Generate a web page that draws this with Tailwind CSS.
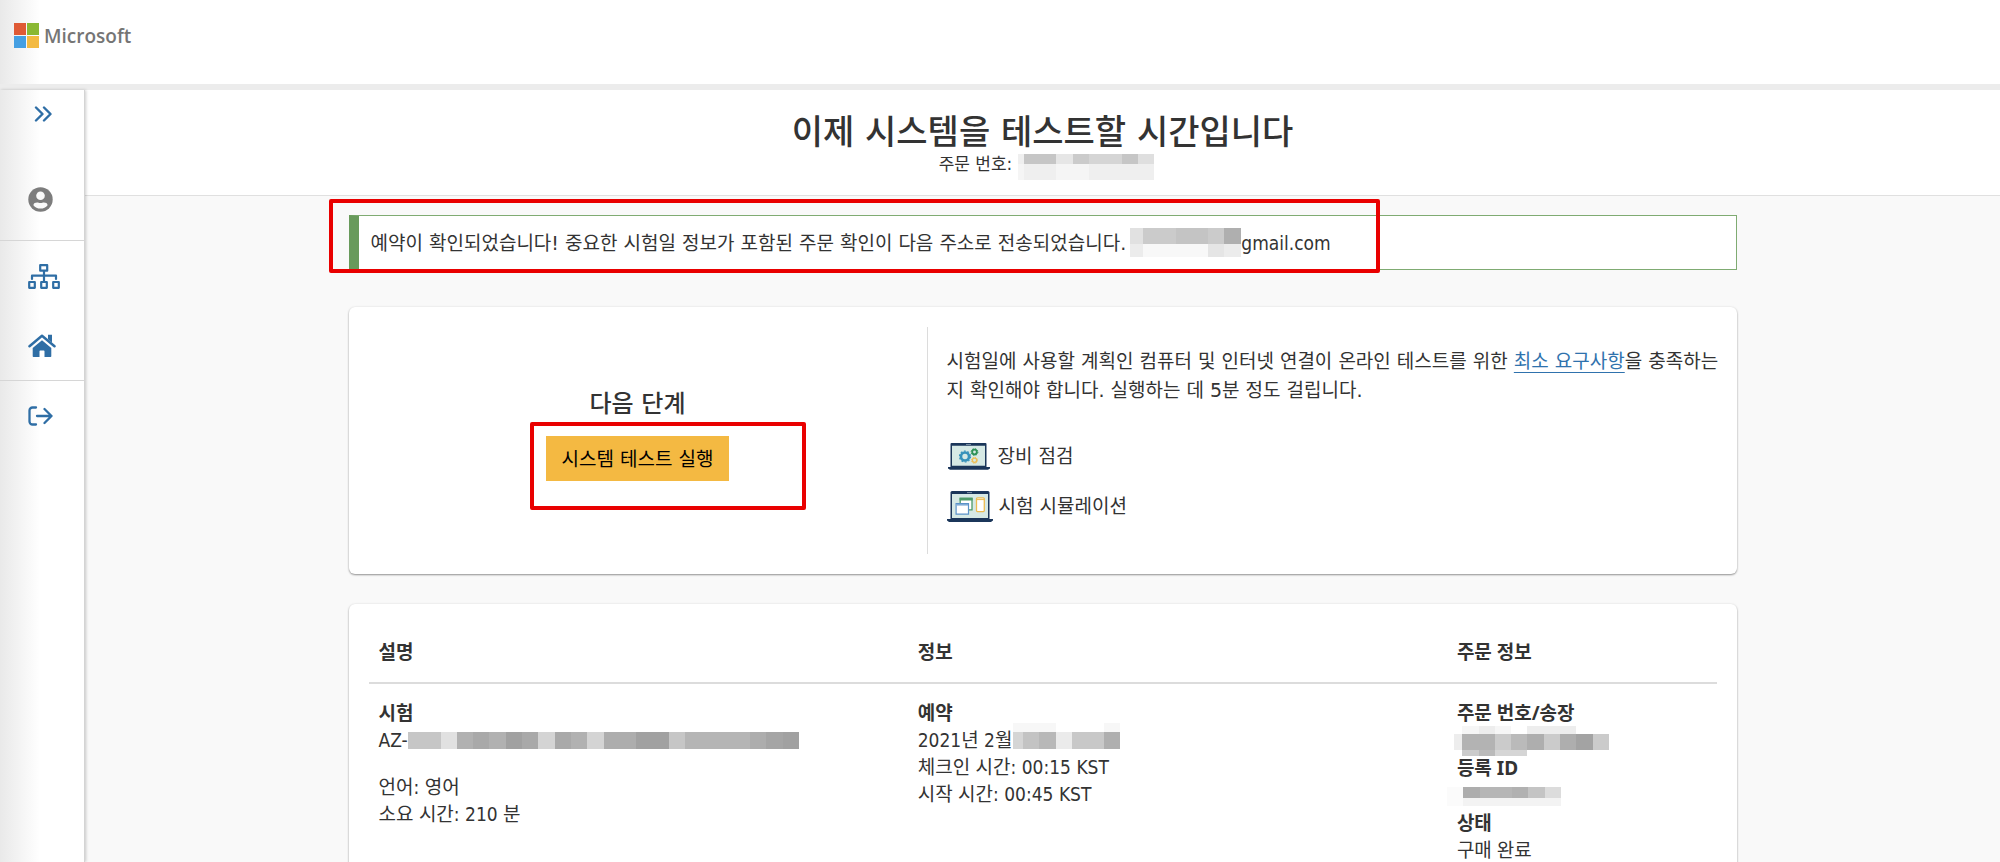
<!DOCTYPE html>
<html lang="ko">
<head>
<meta charset="utf-8">
<title>Microsoft</title>
<script src="https://cdn.jsdelivr.net/npm/@tailwindcss/browser@4"></script>
</head>
<body class="flex h-screen flex-col overflow-hidden bg-white font-['DejaVu_Sans','Noto_Sans_CJK_KR',sans-serif] text-[19px] leading-7 text-[#333333]">

<header class="flex h-[90px] shrink-0 items-start border-b-6 border-[#ececec] bg-linear-to-r from-[#e9e9e9] to-white to-[40px] pt-[23px] pl-[14px]">
  <a href="#" class="flex items-center gap-1">
    <svg class="size-[26px]" viewBox="0 0 26 26" aria-hidden="true">
      <path fill="#df5a35" d="M0 0h12v12H0z"/><path fill="#8ab833" d="M13 0h12v12H13z"/>
      <path fill="#459fe2" d="M0 13h12v12H0z"/><path fill="#f3ba42" d="M13 13h12v12H13z"/>
    </svg>
    <span class="font-['Open_Sans',sans-serif] text-[19px] leading-[26px] font-semibold text-[#757575]">Microsoft</span>
  </a>
</header>

<div class="flex min-h-0 flex-1">
  <nav class="z-10 w-[85px] shrink-0 border-r border-[#d4d4d4] bg-linear-to-r from-[#e9e9e9] to-white to-[40px] text-[#2f6ea5] shadow-[1px_0_3px_rgba(0,0,0,0.2)]">
    <div class="flex h-[151px] flex-col items-start border-b border-[#d6d6d6] pt-4 pl-7">
      <button type="button" class="ml-[6px] h-4">
        <svg class="h-4 w-[18px]" viewBox="0 0 18 16" fill="none" stroke="currentColor" stroke-width="2.4" stroke-linecap="round" stroke-linejoin="round" aria-hidden="true"><path d="M2 1.5 8.5 8 2 14.5M10 1.5 16.5 8 10 14.5"/></svg>
      </button>
      <button type="button" class="mt-[65px] h-[25px] text-[#7d7d7d]">
        <svg class="size-[25px]" viewBox="0 0 25 25" aria-hidden="true"><circle cx="12.5" cy="12.5" r="12.2" fill="currentColor"/><circle cx="12.5" cy="8.8" r="4.3" fill="#fafafa"/><path fill="#fafafa" d="M5.4 18.2c0-2.2 2-2.8 3.7-2.8 1 0 2 .5 3.4.5s2.400-.5 3.400-.5c1.700 0 3.700.6 3.700 2.800-1.700 2.200-4.200 3.400-7.100 3.400s-5.400-1.200-7.100-3.400z"/></svg>
      </button>
    </div>
    <div class="flex h-[140px] flex-col items-start border-b border-[#d6d6d6] pt-[23px] pl-7">
      <button type="button" class="h-[25px]">
        <svg class="h-[25px] w-8" viewBox="0 0 32 25" fill="none" stroke="currentColor" stroke-width="2.200" stroke-linejoin="round" aria-hidden="true"><path d="M12.200 1.200h7v5.500h-7zM1.200 18h5.600v5.800H1.200zM13.200 18h5.600v5.800h-5.600zM25.200 18h5.600v5.800h-5.600zM16 7v10.500M4 15v-3.300h24V15" stroke-linecap="round"/></svg>
      </button>
      <button type="button" class="mt-[45px] h-[23px]">
        <svg class="h-[23px] w-7" viewBox="0 0 28 23" fill="currentColor" aria-hidden="true"><path d="M14 6.300 4.700 14v8.200c0 .4.300.8.800.8h6v-5.800c0-.4.300-.7.700-.7h3.600c.4 0 .7.300.7.700V23h6c.5 0 .8-.4.800-.8V14z"/><path d="M1.500 12.300 14 1.800l12.500 10.500" fill="none" stroke="currentColor" stroke-width="2.500" stroke-linecap="round" stroke-linejoin="round"/><path d="M20 .8h4v7.800l-4-3.300z"/></svg>
      </button>
    </div>
    <div class="flex flex-col items-start pt-[25px] pl-7">
      <button type="button" class="h-5">
        <svg class="h-5 w-[25px]" viewBox="0 0 25 20" fill="none" stroke="currentColor" stroke-width="2.300" stroke-linecap="round" stroke-linejoin="round" aria-hidden="true"><path d="M8 1.500H4.500a3 3 0 0 0-3 3v11a3 3 0 0 0 3 3H8M9 10h14.500M16.500 3 23.500 10l-7 7"/></svg>
      </button>
    </div>
  </nav>

  <main class="min-w-0 flex-1 overflow-hidden bg-[#f9f9f9]">
    <section class="flex h-[106px] flex-col items-center border-b border-[#e0e0e0] bg-white pt-5">
      <h1 class="text-[34px] leading-[44px] font-medium">이제 시스템을 테스트할 시간입니다</h1>
      <div class="flex items-start gap-[6px] pl-2">
        <p class="text-[17px] leading-5">주문 번호:</p>
        <svg class="h-[26px] w-[136px]" viewBox="0 0 136 26" shape-rendering="crispEdges" aria-hidden="true">
          <path fill="#efefef" d="M0 0h6v10H0zM6 10h32v16H6zM71 10h65v16H71z"/><path fill="#f5f5f5" d="M0 10h6v16H0zM38 10h33v16H38z"/>
          <path fill="#c6c6c6" d="M6 0h32v10H6zM104 0h16v10h-16z"/><path fill="#e6e6e6" d="M38 0h17v10H38z"/>
          <path fill="#cbcbcb" d="M55 0h16v10H55z"/><path fill="#d5d5d5" d="M71 0h33v10H71z"/><path fill="#dfdfdf" d="M120 0h16v10h-16z"/>
        </svg>
      </div>
    </section>

    <div class="mx-auto w-full max-w-[1388px] pt-[19px]">
      <div class="relative">
        <div role="status" class="flex h-[55px] items-center border border-l-10 border-[#7fab72] border-l-[#689a5b] bg-white pl-3">
          <p>예약이 확인되었습니다! 중요한 시험일 정보가 포함된 주문 확인이 다음 주소로 전송되었습니다.</p>
          <svg class="ml-1 h-[29px] w-[111px]" viewBox="0 0 111 29" shape-rendering="crispEdges" aria-hidden="true">
            <path fill="#e1e1e1" d="M0 0h13v16H0z"/><path fill="#cbcbcb" d="M13 0h33v16H13zM78 0h16v16H78z"/><path fill="#c4c4c4" d="M46 0h32v16H46z"/><path fill="#afafaf" d="M94 0h17v16H94z"/>
            <path fill="#ececec" d="M0 16h13v13H0zM94 16h17v13H94z"/><path fill="#f8f8f8" d="M13 16h65v13H13z"/><path fill="#e5e5e5" d="M78 16h16v13H78z"/>
          </svg>
          <span class="font-['DejaVu_Sans_Condensed','Noto_Sans',sans-serif]">gmail.com</span>
        </div>
        <div class="pointer-events-none absolute -top-4 -left-5 h-[74px] w-[1051px] rounded-xs border-4 border-[#e90000]"></div>
      </div>

      <section class="mt-[37px] flex rounded-md bg-white py-5 shadow-[0_1px_2px_rgba(0,0,0,0.4),0_0_3px_rgba(0,0,0,0.06)]">
        <div class="flex min-h-[227px] w-[579px] shrink-0 flex-col items-center justify-center border-r border-[#dcdcdc] pb-3">
          <h2 class="text-2xl leading-8 font-medium">다음 단계</h2>
          <div class="relative mt-4">
            <button type="button" class="h-[45px] bg-[#f4b942] px-4 text-black">시스템 테스트 실행</button>
            <div class="pointer-events-none absolute -top-[14px] -left-4 h-[88px] w-[276px] rounded-xs border-4 border-[#e90000]"></div>
          </div>
        </div>
        <div class="flex-1 pt-5 pr-4 pl-[19px]">
          <p class="leading-[29px]">시험일에 사용할 계획인 컴퓨터 및 인터넷 연결이 온라인 테스트를 위한 <a href="#" class="text-[#2f72ad] underline underline-offset-4">최소 요구사항</a>을 충족하는지 확인해야 합니다. 실행하는 데 5분 정도 걸립니다.</p>
          <ul class="mt-[35px] flex flex-col gap-[18px]">
            <li class="flex h-8 items-center gap-[7px]">
              <svg class="h-[27px] w-11" viewBox="0 0 44 27" aria-hidden="true">
                <path fill="#1b365a" d="M4.500 0h34a1 1 0 0 1 1 1v23h-36V1a1 1 0 0 1 1-1z"/><path fill="#d6e9e5" d="M5 2.800h33v20H5z"/><path fill="#1b365a" d="M1 24h42v1.500l-2 1.200H3L1 25.500z"/><path fill="#8fa3b5" d="M19 1h5v.8h-5z"/>
                <circle cx="18" cy="13.500" r="4" fill="none" stroke="#3792bb" stroke-width="2.600"/><circle cx="18" cy="13.500" r="5.500" fill="none" stroke="#3792bb" stroke-width="1.200" stroke-dasharray="1.800 1.655"/>
                <circle cx="27.500" cy="9" r="2.300" fill="none" stroke="#2c9156" stroke-width="1.800"/><circle cx="27.500" cy="9" r="3.400" fill="none" stroke="#2c9156" stroke-width="1" stroke-dasharray="1.400 1.270"/>
                <circle cx="27.500" cy="17.300" r="2.100" fill="none" stroke="#efbe52" stroke-width="1.300"/><circle cx="27.500" cy="17.300" r="3" fill="none" stroke="#efbe52" stroke-width="1" stroke-dasharray="1.200 1.156"/>
              </svg>
              <span>장비 점검</span>
            </li>
            <li class="flex h-8 items-center gap-[6px]">
              <svg class="h-[31px] w-[46px]" viewBox="0 0 46 31" aria-hidden="true">
                <path fill="#1b365a" d="M5 0h36a1.500 1.500 0 0 1 1.500 1.500V28h-39V1.500A1.500 1.500 0 0 1 5 0z"/><path fill="#d6e9e5" d="M5 3h36v24H5z"/><path fill="#1b365a" d="M0 28h46v1.500L44 31H2l-2-1.500z"/><path fill="#8fa3b5" d="M20 1.200h5v.9h-5z"/>
                <path fill="#fff" stroke="#4c9a68" stroke-width="1.300" d="M13.200 7.300H25v11.500H13.200z"/><path fill="#4c9a68" d="M12.600 6.700h13v2.800h-13z"/>
                <path fill="#fff" stroke="#5a92c8" stroke-width="1.200" d="M9.100 12.600h12.400v10.500H9.100z"/><path fill="#7eabd6" d="M9.600 13h11.400v1.600H9.600z"/>
                <rect x="29.500" y="6.800" width="7.800" height="13.800" rx="1" fill="#fff" stroke="#edbb50" stroke-width="1.300"/><path stroke="#edbb50" stroke-width="1" d="M30 8.600h7"/>
              </svg>
              <span>시험 시뮬레이션</span>
            </li>
          </ul>
        </div>
      </section>

      <section class="mt-[30px] rounded-md bg-white px-5 pt-[35px] pb-10 shadow-[0_1px_2px_rgba(0,0,0,0.4),0_0_3px_rgba(0,0,0,0.06)]">
        <table class="w-full table-fixed border-collapse text-left align-top leading-[27px]">
          <colgroup><col class="w-2/5"><col class="w-2/5"><col class="w-1/5"></colgroup>
          <thead class="font-['Noto_Sans','Noto_Sans_CJK_KR',sans-serif]">
            <tr class="border-b-2 border-[#dcdcdc]">
              <th class="px-[10px] pb-4 font-bold">설명</th>
              <th class="px-[10px] pb-4 font-bold">정보</th>
              <th class="px-[10px] pb-4 font-bold">주문 정보</th>
            </tr>
          </thead>
          <tbody class="font-['DejaVu_Sans_Condensed','Noto_Sans_CJK_KR',sans-serif]">
            <tr class="align-top">
              <td class="px-[10px] pt-4">
                <p class="font-bold">시험</p>
                <div class="flex h-[27px] items-center">
                  <span>AZ-</span>
                  <svg class="h-[17px] w-[391px]" viewBox="0 0 24 17" preserveAspectRatio="none" shape-rendering="crispEdges" aria-hidden="true">
                    <path fill="#c6c6c6" d="M0 0h2v17H0zM16 0h1v17h-1z"/><path fill="#e1e1e1" d="M2 0h1v17H2z"/><path fill="#b1b1b1" d="M3 0h1v17H3zM5 0h1v17H5zM10 0h1v17h-1z"/>
                    <path fill="#a9a9a9" d="M4 0h1v17H4zM7 0h1v17H7zM9 0h1v17H9z"/><path fill="#a1a1a1" d="M6 0h1v17H6zM14 0h2v17h-2zM23 0h1v17h-1z"/>
                    <path fill="#d4d4d4" d="M8 0h1v17H8zM11 0h1v17h-1z"/><path fill="#adadad" d="M12 0h2v17h-2zM21 0h1v17h-1z"/><path fill="#b5b5b5" d="M17 0h4v17h-4z"/><path fill="#a5a5a5" d="M22 0h1v17h-1z"/>
                  </svg>
                </div>
                <p class="mt-5">언어: 영어</p>
                <p>소요 시간: 210 분</p>
              </td>
              <td class="px-[10px] pt-4">
                <p class="font-bold">예약</p>
                <div class="flex h-[27px] items-center gap-px">
                  <span>2021년 2월</span>
                  <svg class="mb-2 h-[27px] w-[107px]" viewBox="0 0 107 27" shape-rendering="crispEdges" aria-hidden="true">
                    <path fill="#f7f7f7" d="M0 0h43v9H0zM91 0h16v9H91z"/>
                    <path fill="#d5d5d5" d="M0 9h10v17H0z"/><path fill="#c3c3c3" d="M10 9h16v17H10z"/><path fill="#b8b8b8" d="M26 9h17v17H26z"/><path fill="#ebebeb" d="M43 9h16v17H43z"/><path fill="#c8c8c8" d="M59 9h32v17H59z"/><path fill="#afafaf" d="M91 9h16v17H91z"/>
                  </svg>
                </div>
                <p>체크인 시간: 00:15 KST</p>
                <p>시작 시간: 00:45 KST</p>
              </td>
              <td class="px-[10px] pt-4 font-['Noto_Sans','Noto_Sans_CJK_KR',sans-serif]">
                <p class="font-bold">주문 번호/송장</p>
                <div class="-ml-[3px] flex h-7 items-center">
                  <svg class="h-[30px] w-[155px]" viewBox="0 0 155 30" shape-rendering="crispEdges" aria-hidden="true">
                    <path fill="#f6f6f6" d="M8 0h49v8H8z"/><path fill="#ededed" d="M25 0h16v8H25zM73 0h49v8H73zM0 8h8v16H0z"/>
                    <path fill="#b3b3b3" d="M8 8h33v16H8z"/><path fill="#cbcbcb" d="M41 8h16v16H41zM90 8h16v16H90zM139 8h16v16h-16zM8 24h17v6H8z"/><path fill="#bababa" d="M57 8h16v16H57zM25 24h16v6H25z"/>
                    <path fill="#aeaeae" d="M73 8h17v16H73zM106 8h16v16h-16z"/><path fill="#a3a3a3" d="M122 8h17v16h-17z"/><path fill="#d5d5d5" d="M41 24h32v6H41z"/>
                  </svg>
                </div>
                <p class="font-bold">등록 ID</p>
                <div class="-ml-[10px] flex h-7 items-center">
                  <svg class="h-[19px] w-[114px]" viewBox="0 0 114 19" shape-rendering="crispEdges" aria-hidden="true">
                    <path fill="#fbfbfb" d="M0 0h16v19H0z"/><path fill="#f3f3f3" d="M16 11h98v8H16z"/>
                    <path fill="#adadad" d="M16 0h17v11H16z"/><path fill="#b6b6b6" d="M33 0h32v11H33z"/><path fill="#b1b1b1" d="M65 0h16v11H65z"/><path fill="#c4c4c4" d="M81 0h17v11H81z"/><path fill="#dcdcdc" d="M98 0h16v11H98z"/>
                  </svg>
                </div>
                <p class="font-bold">상태</p>
                <p>구매 완료</p>
              </td>
            </tr>
          </tbody>
        </table>
      </section>
    </div>
  </main>
</div>
</body>
</html>
